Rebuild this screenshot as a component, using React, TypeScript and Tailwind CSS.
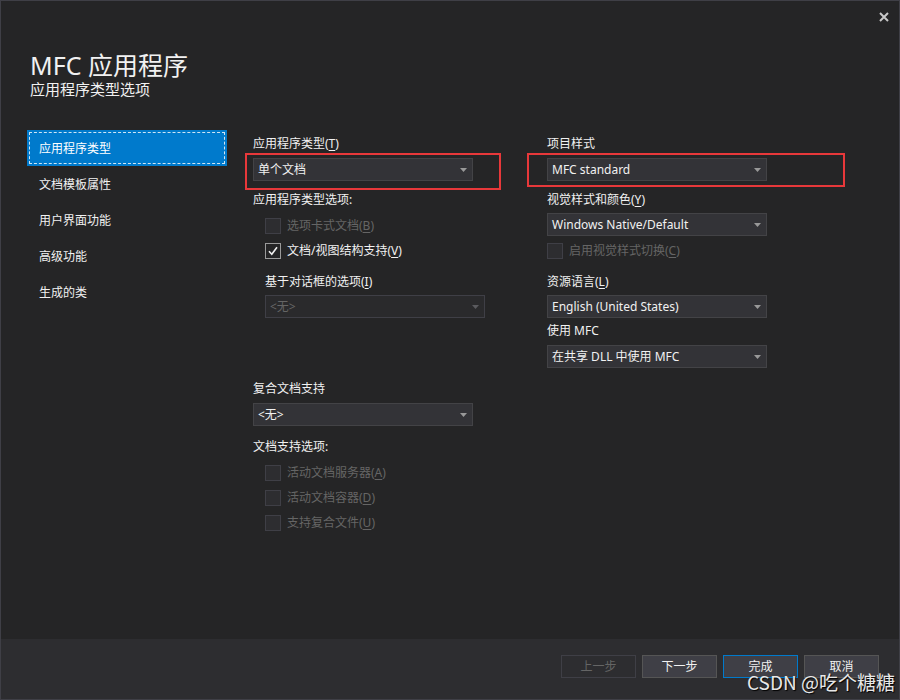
import React from "react";

const FONT = { fontFamily: '"Segoe UI", "Noto Sans", "Noto Sans CJK SC", sans-serif' };

function Arrow({ disabled }: { disabled?: boolean }) {
  return (
    <svg width="7" height="4" viewBox="0 0 7 4" className="shrink-0">
      <path d="M0 0h7L3.5 4z" fill={disabled ? "#5a5a5e" : "#999999"} />
    </svg>
  );
}

function Select({ value, width = "w-[220px]", disabled }: { value: string; width?: string; disabled?: boolean }) {
  return (
    <div
      className={`${width} h-[23px] flex items-center justify-between pl-[4px] pr-[5px] border text-[12px] ${
        disabled ? "border-[#3f3f46] bg-[#2a2a2c] text-[#656565]" : "border-[#434346] bg-[#333337] text-[#f1f1f1]"
      }`}
    >
      <span className="leading-none">{value}</span>
      <Arrow disabled={disabled} />
    </div>
  );
}

function Check({ label, checked, disabled }: { label: React.ReactNode; checked?: boolean; disabled?: boolean }) {
  return (
    <div className="flex items-center h-[16px]">
      <div
        className={`w-[16px] h-[16px] border flex items-center justify-center ${
          checked ? "border-[#9a9a9a] bg-[#252526]" : "border-[#3f3f46] bg-[#2d2d30]"
        }`}
      >
        {checked && (
          <svg width="12" height="12" viewBox="0 0 12 12">
            <path d="M2 6.3l2.8 3L10 2.2" stroke="#f1f1f1" strokeWidth="1.6" fill="none" />
          </svg>
        )}
      </div>
      <span className={`ml-[6px] text-[12px] leading-none ${disabled ? "text-[#656565]" : "text-[#f1f1f1]"}`}>{label}</span>
    </div>
  );
}

function Label({ children, className = "" }: { children: React.ReactNode; className?: string }) {
  return <div className={`h-[16px] flex items-center text-[12px] text-[#f1f1f1] leading-none ${className}`}>{children}</div>;
}

function U({ c }: { c: string }) {
  return <span className="underline underline-offset-2">{c}</span>;
}

function Red({ children, className }: { children: React.ReactNode; className: string }) {
  return (
    <div className="relative">
      {children}
      <div className={`absolute border-2 border-[#e8383a] pointer-events-none ${className}`} />
    </div>
  );
}

function Btn({ label, disabled, primary }: { label: string; disabled?: boolean; primary?: boolean }) {
  return (
    <div
      className={`w-[75px] h-[23px] flex items-center justify-center text-[12px] border ${
        disabled
          ? "border-[#3f3f46] bg-[#2d2d30] text-[#656565]"
          : primary
          ? "border-[#007acc] bg-[#3f3f46] text-[#f1f1f1]"
          : "border-[#555555] bg-[#3f3f46] text-[#f1f1f1]"
      }`}
    >
      {label}
    </div>
  );
}

export default function App() {
  const side = ["应用程序类型", "文档模板属性", "用户界面功能", "高级功能", "生成的类"];
  return (
    <div style={FONT} className="relative w-[900px] h-[700px] bg-[#252526] border border-[#3f3f46] flex flex-col overflow-hidden">
      <svg className="absolute left-[878px] top-[11px]" width="10" height="10" viewBox="0 0 10 10">
        <path d="M1 1l8 8M9 1l-8 8" stroke="#c8c8c8" strokeWidth="2" />
      </svg>

      <div className="pl-[29px] pt-[50px] h-[128px]">
        <div className="text-[25px] leading-[29px] text-[#f1f1f1]">MFC 应用程序</div>
        <div className="text-[15px] leading-[19px] text-[#f1f1f1]">应用程序类型选项</div>
      </div>

      <div className="flex flex-1 pt-[1px]">
        <div className="ml-[26px] w-[200px] flex flex-col">
          {side.map((s, i) => (
            <div
              key={s}
              className={`h-[36px] flex items-center pl-[12px] pt-[1px] text-[12px] relative ${
                i === 0 ? "bg-[#007acc] text-white" : "text-[#f1f1f1]"
              }`}
            >
              {i === 0 && <div className="absolute inset-[2px] border border-dashed border-[#cfe6f5]" />}
              <span className="relative">{s}</span>
            </div>
          ))}
        </div>

        <div className="ml-[26px] w-[294px] flex flex-col pt-[6px]">
          <Label>
            应用程序类型(<U c="T" />)
          </Label>
          <div className="mt-[6px]">
            <Red className="-left-[8px] -top-[5px] w-[256px] h-[37px]">
              <Select value="单个文档" />
            </Red>
          </div>
          <Label className="mt-[11px]">应用程序类型选项:</Label>
          <div className="mt-[10px] pl-[12px]">
            <Check
              disabled
              label={
                <>
                  选项卡式文档(<U c="B" />)
                </>
              }
            />
          </div>
          <div className="mt-[9px] pl-[12px]">
            <Check
              checked
              label={
                <>
                  文档/视图结构支持(<U c="V" />)
                </>
              }
            />
          </div>
          <Label className="mt-[15px] pl-[12px]">
            基于对话框的选项(<U c="I" />)
          </Label>
          <div className="mt-[5px] pl-[12px]">
            <Select value="<无>" disabled />
          </div>
          <Label className="mt-[63px]">复合文档支持</Label>
          <div className="mt-[6px]">
            <Select value="<无>" />
          </div>
          <Label className="mt-[13px]">文档支持选项:</Label>
          <div className="mt-[10px] pl-[12px]">
            <Check
              disabled
              label={
                <>
                  活动文档服务器(<U c="A" />)
                </>
              }
            />
          </div>
          <div className="mt-[9px] pl-[12px]">
            <Check
              disabled
              label={
                <>
                  活动文档容器(<U c="D" />)
                </>
              }
            />
          </div>
          <div className="mt-[9px] pl-[12px]">
            <Check
              disabled
              label={
                <>
                  支持复合文件(<U c="U" />)
                </>
              }
            />
          </div>
        </div>

        <div className="w-[260px] flex flex-col pt-[6px]">
          <Label>项目样式</Label>
          <div className="mt-[6px]">
            <Red className="-left-[20px] -top-[5px] w-[318px] h-[34px]">
              <Select value="MFC standard" />
            </Red>
          </div>
          <Label className="mt-[11px]">
            视觉样式和颜色(<U c="Y" />)
          </Label>
          <div className="mt-[5px]">
            <Select value="Windows Native/Default" />
          </div>
          <div className="mt-[7px]">
            <Check
              disabled
              label={
                <>
                  启用视觉样式切换(<U c="C" />)
                </>
              }
            />
          </div>
          <Label className="mt-[15px]">
            资源语言(<U c="L" />)
          </Label>
          <div className="mt-[5px]">
            <Select value="English (United States)" />
          </div>
          <Label className="mt-[5px]">使用 MFC</Label>
          <div className="mt-[6px]">
            <Select value="在共享 DLL 中使用 MFC" />
          </div>
        </div>
      </div>

      <div className="h-[60px] bg-[#2d2d30] flex justify-end items-start pt-[16px] pr-[20px] gap-[6px]">
        <Btn label="上一步" disabled />
        <Btn label="下一步" />
        <Btn label="完成" primary />
        <Btn label="取消" />
      </div>

      <div
        className="absolute left-[746px] top-[669px] text-[19px] leading-[24px] text-[#e8e8e8]"
        style={{ fontFamily: '"Noto Sans CJK SC", sans-serif', textShadow: "1px 1px 1px #000" }}
      >
        CSDN @吃个糖糖
      </div>
    </div>
  );
}
